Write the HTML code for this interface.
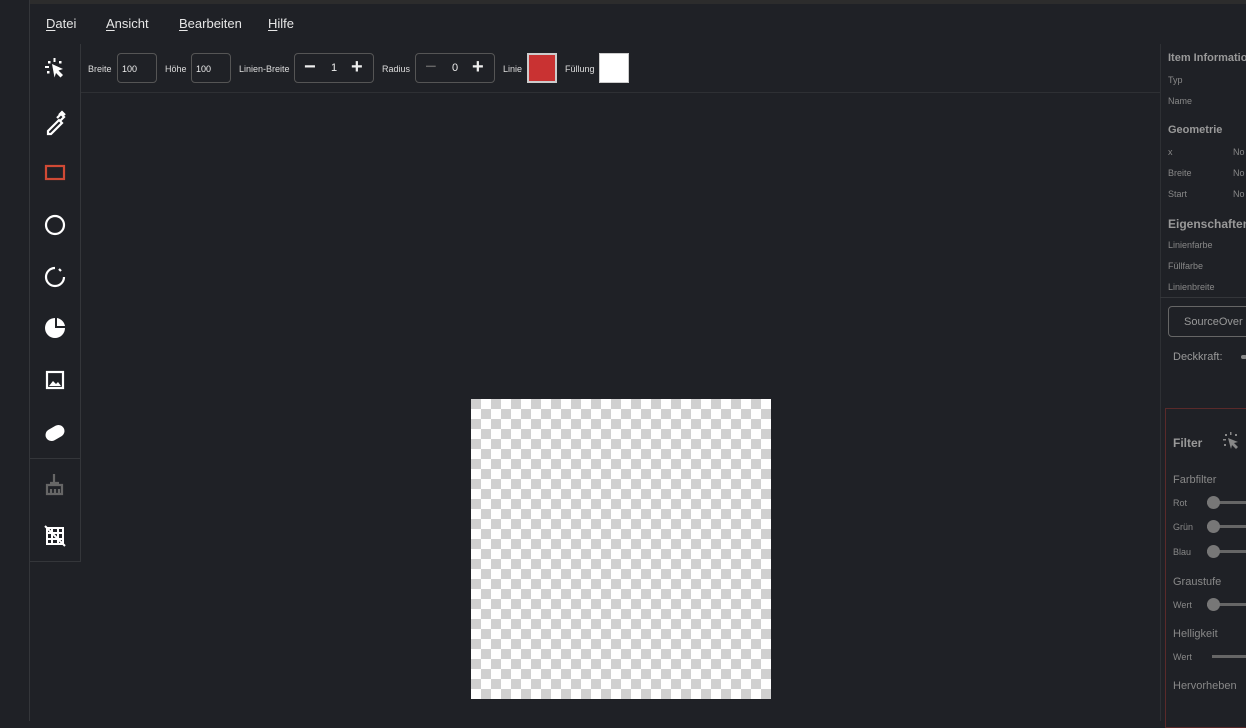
<!DOCTYPE html><html><head><style>
*{margin:0;padding:0;box-sizing:border-box}
body{width:1246px;height:721px;background:#1f2126;font-family:"Liberation Sans",sans-serif;color:#ddd;position:relative;overflow:hidden}
.a{position:absolute;white-space:nowrap}
.menu span{position:absolute;top:16px;font-size:13px;color:#e6e6e6}
.menu u{text-decoration-thickness:1px;text-underline-offset:2px}
.lbl{position:absolute;font-size:9px;color:#ddd;top:64px}
.box{position:absolute;top:53px;height:30px;border:1px solid #555;border-radius:4px;font-size:9px;color:#eee}
.rp{position:absolute;left:1168px;font-size:9px;color:#888;white-space:nowrap}
.rh{position:absolute;left:1168px;font-size:11px;font-weight:bold;color:#999;white-space:nowrap}
.fl{position:absolute;left:1173px;font-size:11px;color:#888}
.sl{position:absolute;left:1207px;width:40px;height:3px;background:#666}
.sl:before{content:"";position:absolute;left:0;top:-5px;width:13px;height:13px;border-radius:50%;background:#777}
.chk{left:471px;top:399px;width:300px;height:300px;background-color:#fff;background-image:linear-gradient(45deg,#d0d0d0 25%,transparent 25%,transparent 75%,#d0d0d0 75%),linear-gradient(45deg,#d0d0d0 25%,transparent 25%,transparent 75%,#d0d0d0 75%);background-size:20px 20px;background-position:10px 0,0 10px}
</style></head><body>
<div class="a" style="left:30px;top:0;width:1216px;height:4px;background:#2c2c2c"></div>
<div class="a" style="left:29px;top:0;width:1px;height:721px;background:#34363a"></div>
<div class="menu"><span style="left:46px"><u>D</u>atei</span><span style="left:106px"><u>A</u>nsicht</span><span style="left:179px"><u>B</u>earbeiten</span><span style="left:268px"><u>H</u>ilfe</span></div>
<div class="a" style="left:30px;top:44px;width:51px;height:518px;border-right:1px solid #34363a;border-bottom:1px solid #34363a"></div>
<div class="a" style="left:30px;top:458px;width:51px;height:1px;background:#34363a"></div>
<div class="a" style="left:81px;top:92px;width:1079px;height:1px;background:#2e3034"></div>
<div class="a" style="left:1160px;top:44px;width:1px;height:677px;background:#2e3034"></div>
<svg class="a" style="left:30px;top:44px" width="51" height="518" fill="none" stroke="#fff" stroke-width="2.2">
<g fill="#fff" stroke="none"><path d="M22 20l11 5-4.5 1.5 4.5 4.5-2.5 2.5-4.5-4.5-1.5 4.5z"/><rect x="23.5" y="14" width="2" height="4"/><rect x="15" y="22" width="4" height="2"/><rect x="18" y="17" width="2.5" height="2.5"/><rect x="29" y="17" width="2.5" height="2.5"/><rect x="17" y="27" width="2.5" height="2.5"/></g>
<path d="M18 87l11-11 3 3-11 11h-3z M27 74l4-4 3 3-4 4 M29 71l3-3 3 3" stroke-width="2.2"/>
<rect x="16" y="122" width="18" height="13" stroke="#d04a35"/>
<circle cx="25" cy="181" r="9"/>
<path d="M25 224a9 9 0 1 0 9 9"/><path d="M29 225l2 2"/>
<path d="M25 274a10 10 0 1 0 10 10h-10z M27 274l0 8 8 0a10 10 0 0 0-8-8" fill="#fff" stroke="none"/>
<rect x="17" y="328" width="16" height="16"/><path d="M19 342l4-5 3 3 2-2 3 4z" fill="#fff" stroke="none"/>
<rect x="15" y="383" width="20" height="12" rx="6" transform="rotate(-30 25 389)" fill="#fff" stroke="none"/>
<g stroke="#666"><path d="M24 430v9M20 439h9M17 441h15v9H17zM21 445v5M25 445v5M29 445v5"/></g>
<g stroke-width="2"><rect x="17" y="484" width="16" height="16"/><path d="M17 489h16M17 495h16M22 484v16M28 484v16M15 482l20 20"/></g>
</svg>
<div class="lbl" style="left:88px">Breite</div>
<div class="box" style="left:117px;width:40px"><span class="a" style="left:4px;top:10px">100</span></div>
<div class="lbl" style="left:165px">Höhe</div>
<div class="box" style="left:191px;width:40px"><span class="a" style="left:4px;top:10px">100</span></div>
<div class="lbl" style="left:239px">Linien-Breite</div>
<div class="box" style="left:294px;width:80px"><span class="a" style="left:9px;top:2px;font-size:20px;font-weight:bold">−</span><span class="a" style="left:36px;top:8px;font-size:11px">1</span><span class="a" style="left:56px;top:2px;font-size:20px;font-weight:bold">+</span></div>
<div class="lbl" style="left:382px">Radius</div>
<div class="box" style="left:415px;width:80px"><span class="a" style="left:9px;top:2px;font-size:20px;color:#666">−</span><span class="a" style="left:36px;top:8px;font-size:11px">0</span><span class="a" style="left:56px;top:2px;font-size:20px;font-weight:bold">+</span></div>
<div class="lbl" style="left:503px">Linie</div>
<div class="a" style="left:527px;top:53px;width:30px;height:30px;background:#c93232;border:2px solid #ccc"></div>
<div class="lbl" style="left:565px">Füllung</div>
<div class="a" style="left:599px;top:53px;width:30px;height:30px;background:#fff;border:1px solid #ccc"></div>
<div class="a chk"></div>
<div class="rh" style="top:52px">Item Information</div>
<div class="rp" style="top:75px">Typ</div><div class="rp" style="top:96px">Name</div>
<div class="rh" style="top:124px">Geometrie</div>
<div class="rp" style="top:147px">x</div><div class="rp" style="top:168px">Breite</div><div class="rp" style="top:189px">Start</div>
<div class="rp" style="top:147px;left:1233px">No</div><div class="rp" style="top:168px;left:1233px">No</div><div class="rp" style="top:189px;left:1233px">No</div>
<div class="rh" style="top:217px;font-size:12px">Eigenschaften</div>
<div class="rp" style="top:240px">Linienfarbe</div><div class="rp" style="top:261px">Füllfarbe</div><div class="rp" style="top:282px">Linienbreite</div>
<div class="a" style="left:1160px;top:297px;width:86px;height:1px;background:#34363a"></div>
<div class="a" style="left:1168px;top:306px;width:90px;height:31px;border:1px solid #666;border-radius:4px;font-size:11px;color:#999;padding:9px 0 0 15px">SourceOver</div>
<div class="a" style="left:1173px;top:351px;font-size:11px;color:#999">Deckkraft:</div>
<div class="a" style="left:1241px;top:355px;width:6px;height:4px;border-radius:2px;background:#888"></div>
<div class="a" style="left:1165px;top:408px;width:90px;height:320px;border:1px solid #5a2a2a"></div>
<div class="a" style="left:1173px;top:436px;font-size:12px;font-weight:bold;color:#999">Filter</div>
<svg class="a" style="left:1220px;top:430px" width="26" height="24" fill="#888"><path d="M8 8l10 4-4 1 4 4-2 2-4-4-1 4z"/><rect x="10" y="2" width="1.5" height="3"/><rect x="3" y="9" width="3" height="1.5"/><rect x="5" y="4" width="2" height="2"/><rect x="15" y="4" width="2" height="2"/><rect x="4" y="14" width="2" height="2"/></svg>
<div class="fl" style="top:474px">Farbfilter</div>
<div class="rp" style="top:498px;left:1173px">Rot</div><div class="sl" style="top:501px"></div>
<div class="rp" style="top:522px;left:1173px">Grün</div><div class="sl" style="top:525px"></div>
<div class="rp" style="top:547px;left:1173px">Blau</div><div class="sl" style="top:550px"></div>
<div class="fl" style="top:576px">Graustufe</div>
<div class="rp" style="top:600px;left:1173px">Wert</div><div class="sl" style="top:603px"></div>
<div class="fl" style="top:628px">Helligkeit</div>
<div class="rp" style="top:652px;left:1173px">Wert</div><div class="a" style="left:1212px;top:655px;width:40px;height:3px;background:#666"></div>
<div class="fl" style="top:680px">Hervorheben</div>
</body></html>
